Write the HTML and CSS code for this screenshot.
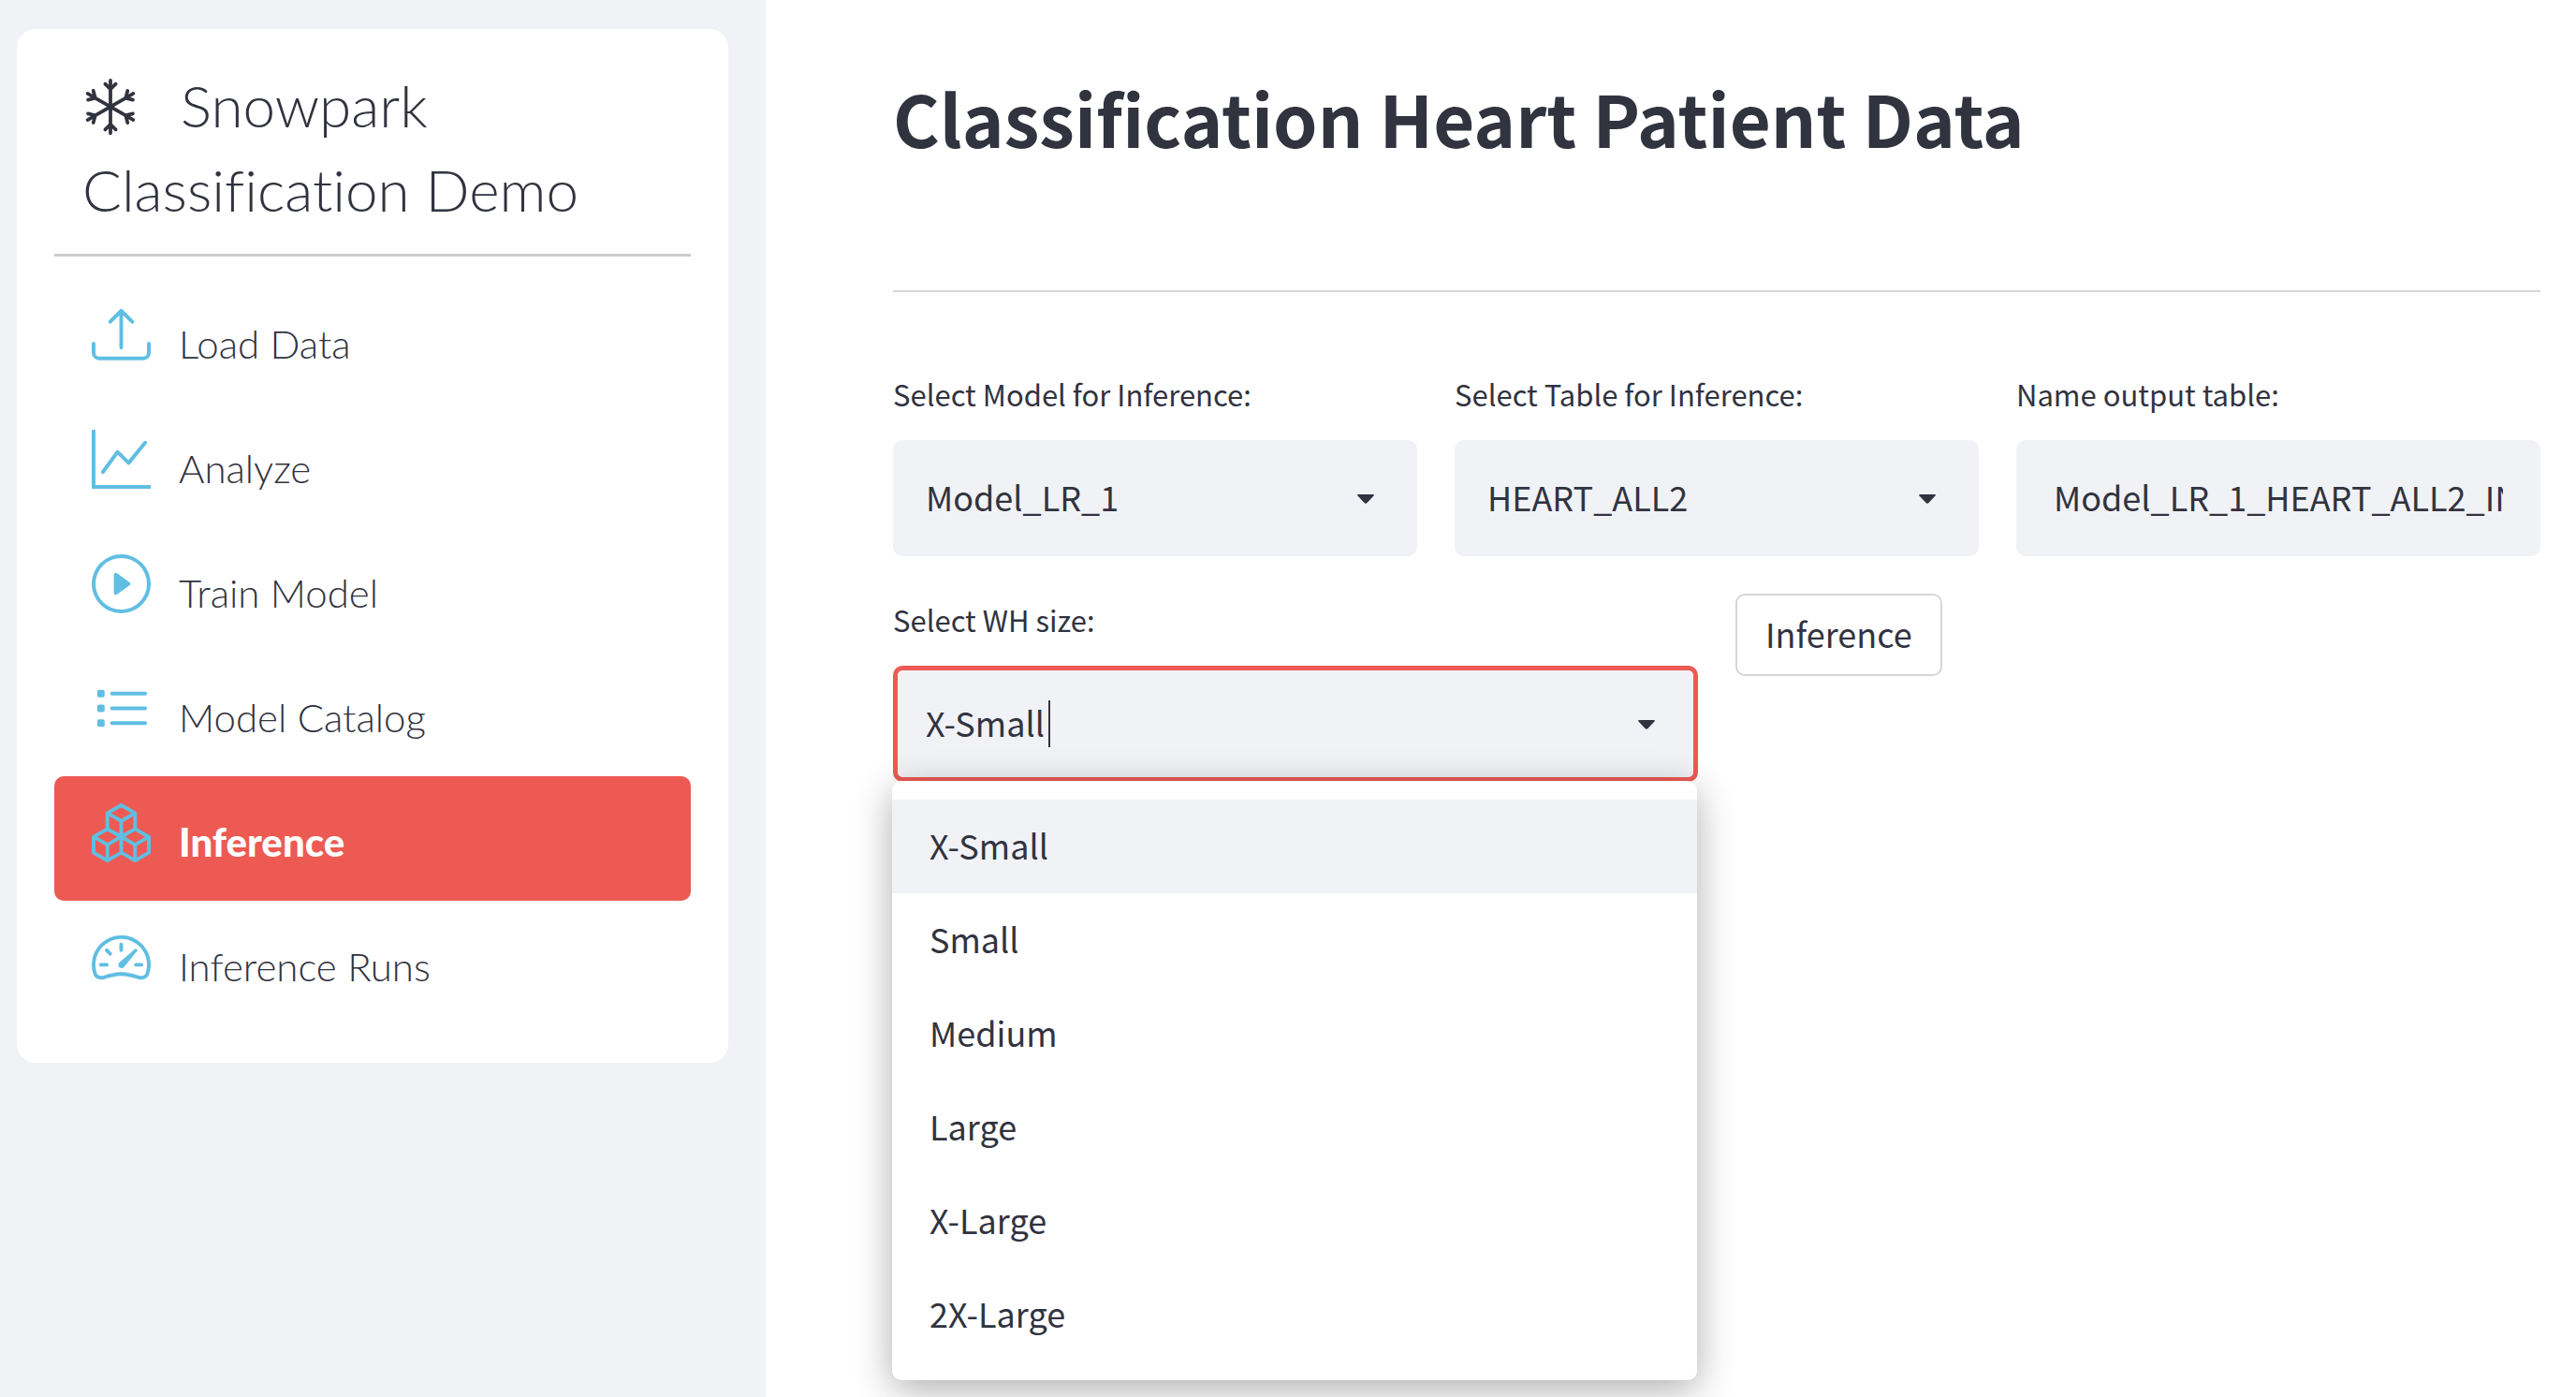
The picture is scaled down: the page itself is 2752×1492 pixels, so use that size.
FILE: index.html
```html
<!DOCTYPE html>
<html lang="en">
<head>
<meta charset="utf-8">
<title>Classification Heart Patient Data</title>
<link rel="stylesheet" href="styles.css">
</head>
<body>
<div class="app">
  <aside class="sidebar">
    <div class="menu-card">
      <h2 class="menu-title">
        <svg class="menu-logo" viewBox="0 0 16 16" aria-hidden="true"><path d="M8 16a.5.5 0 0 1-.5-.5v-1.293l-.646.647a.5.5 0 0 1-.707-.708L7.5 12.793V8.866l-3.4 1.963-.496 1.85a.5.5 0 1 1-.966-.26l.237-.882-1.12.646a.5.5 0 0 1-.5-.866l1.12-.646-.884-.237a.5.5 0 1 1 .26-.966l1.848.495L7 8 3.6 6.037l-1.85.495a.5.5 0 0 1-.258-.966l.883-.237-1.12-.646a.5.5 0 1 1 .5-.866l1.12.646-.237-.883a.5.5 0 1 1 .966-.258l.495 1.849L7.5 7.134V3.207L6.147 1.854a.5.5 0 1 1 .707-.708l.646.647V.5a.5.5 0 1 1 1 0v1.293l.647-.647a.5.5 0 1 1 .707.708L8.5 3.207v3.927l3.4-1.963.496-1.85a.5.5 0 1 1 .966.26l-.236.882 1.12-.646a.5.5 0 0 1 .5.866l-1.12.646.883.237a.5.5 0 1 1-.26.966l-1.848-.495L9 8l3.4 1.963 1.849-.495a.5.5 0 0 1 .259.966l-.883.237 1.12.646a.5.5 0 0 1-.5.866l-1.12-.646.236.883a.5.5 0 1 1-.966.258l-.495-1.849-3.4-1.963v3.927l1.353 1.353a.5.5 0 0 1-.707.708l-.647-.647V15.500a.5.5 0 0 1-.5.5z"/></svg>Snowpark Classification Demo
      </h2>
      <hr class="menu-rule">
      <nav class="menu">
        <a class="menu-item" href="#load-data">
          <svg class="menu-icon" viewBox="0 0 16 16" aria-hidden="true"><path d="M.5 9.9a.5.5 0 0 1 .5.5v2.5a1 1 0 0 0 1 1h12a1 1 0 0 0 1-1v-2.5a.5.5 0 0 1 1 0v2.5a2 2 0 0 1-2 2H2a2 2 0 0 1-2-2v-2.5a.5.5 0 0 1 .5-.5z"/><path d="M7.646 1.146a.5.5 0 0 1 .708 0l3 3a.5.5 0 0 1-.708.708L8.5 2.707V11.5a.5.5 0 0 1-1 0V2.707L5.354 4.854a.5.5 0 1 1-.708-.708l3-3z"/></svg>
          Load Data
        </a>
        <a class="menu-item" href="#analyze">
          <svg class="menu-icon" viewBox="0 0 16 16" aria-hidden="true"><path fill-rule="evenodd" d="M0 0h1v15h15v1H0V0Zm14.817 3.113a.5.5 0 0 1 .07.704l-4.5 5.5a.5.5 0 0 1-.74.037L7.06 6.767l-3.656 5.027a.5.5 0 0 1-.808-.588l4-5.5a.5.5 0 0 1 .758-.06l2.609 2.61 4.15-5.073a.5.5 0 0 1 .704-.07Z"/></svg>
          Analyze
        </a>
        <a class="menu-item" href="#train-model">
          <svg class="menu-icon" viewBox="0 0 16 16" aria-hidden="true"><path d="M8 15A7 7 0 1 1 8 1a7 7 0 0 1 0 14zm0 1A8 8 0 1 0 8 0a8 8 0 0 0 0 16z"/><path d="M6.271 5.055a.5.5 0 0 1 .52.038l3.5 2.5a.5.5 0 0 1 0 .814l-3.5 2.5A.5.5 0 0 1 6 10.5v-5a.5.5 0 0 1 .271-.445z"/></svg>
          Train Model
        </a>
        <a class="menu-item" href="#model-catalog">
          <svg class="menu-icon" viewBox="0 0 16 16" aria-hidden="true"><path d="M5.5 3.5h9a.5.5 0 0 1 0 1h-9a.5.5 0 0 1 0-1zM5.5 7.5h9a.5.5 0 0 1 0 1h-9a.5.5 0 0 1 0-1zM5.5 11.5h9a.5.5 0 0 1 0 1h-9a.5.5 0 0 1 0-1z"/><rect x="1.5" y="3" width="2" height="2" rx=".5"/><rect x="1.5" y="7" width="2" height="2" rx=".5"/><rect x="1.5" y="11" width="2" height="2" rx=".5"/></svg>
          Model Catalog
        </a>
        <a class="menu-item menu-item-active" href="#inference" aria-current="page">
          <svg class="menu-icon" viewBox="0 0 16 16" aria-hidden="true"><path d="M7.752.066a.5.5 0 0 1 .496 0l3.75 2.143a.5.5 0 0 1 .252.434v3.995l3.498 2A.5.5 0 0 1 16 9.07v4.286a.5.5 0 0 1-.252.434l-3.75 2.143a.5.5 0 0 1-.496 0l-3.502-2-3.502 2.001a.5.5 0 0 1-.496 0l-3.75-2.143A.5.5 0 0 1 0 13.357V9.071a.5.5 0 0 1 .252-.434L3.75 6.638V2.643a.5.5 0 0 1 .252-.434L7.752.066ZM4.25 7.504 1.508 9.071l2.742 1.567 2.742-1.567L4.25 7.504ZM7.5 9.933l-2.75 1.571v3.134l2.75-1.571V9.933Zm1 3.134 2.75 1.571v-3.134L8.5 9.933v3.134Zm.508-3.996 2.742 1.567 2.742-1.567-2.742-1.567-2.742 1.567Zm2.242-2.433V3.504L8.5 5.076V8.21l2.75-1.572ZM7.5 8.21V5.076L4.75 3.504v3.134L7.5 8.21ZM5.258 2.643 8 4.21l2.742-1.567L8 1.076 5.258 2.643ZM15 9.933l-2.75 1.571v3.134L15 13.067V9.933ZM3.75 14.638v-3.134L1 9.933v3.134l2.75 1.571Z"/></svg>
          Inference
        </a>
        <a class="menu-item" href="#inference-runs">
          <svg class="menu-icon" viewBox="0 0 16 16" aria-hidden="true"><path d="M8 4a.5.5 0 0 1 .5.5V6a.5.5 0 0 1-1 0V4.500A.5.5 0 0 1 8 4zM3.732 5.732a.5.5 0 0 1 .707 0l.915.914a.5.5 0 1 1-.708.708l-.914-.915a.5.5 0 0 1 0-.707zM2 10a.5.5 0 0 1 .5-.5h1.586a.5.5 0 0 1 0 1H2.5A.5.5 0 0 1 2 10zm9.5 0a.5.5 0 0 1 .5-.5h1.5a.5.5 0 0 1 0 1H12a.5.5 0 0 1-.5-.5zm.754-4.246a.389.389 0 0 0-.527-.02L7.547 9.31a.91.91 0 1 0 1.302 1.258l3.434-4.297a.389.389 0 0 0-.029-.518z"/><path fill-rule="evenodd" d="M0 10a8 8 0 1 1 15.547 2.661c-.442 1.253-1.845 1.602-2.932 1.25C11.309 13.488 9.475 13 8 13c-1.474 0-3.31.488-4.615.911-1.087.352-2.49.003-2.932-1.25A7.988 7.988 0 0 1 0 10zm8-7a7 7 0 0 0-6.603 9.329c.203.575.923.876 1.68.63C4.397 12.533 6.358 12 8 12s3.604.532 4.923.96c.757.245 1.477-.056 1.68-.631A7 7 0 0 0 8 3z"/></svg>
          Inference Runs
        </a>
      </nav>
    </div>
  </aside>

  <main class="content">
    <h1 class="page-title">Classification Heart Patient Data</h1>
    <hr class="page-rule">

    <form class="form">
      <div class="row row-thirds">
        <div class="field">
          <label class="label" for="model">Select Model for Inference:</label>
          <div class="select">
            <select class="control" id="model"><option>Model_LR_1</option></select>
            <svg class="chevron" viewBox="0 0 18 10" aria-hidden="true"><path d="M1 0h16q1.500 0 .5 1.500L10.500 9q-1.500 1.500-3 0L.5 1.500Q-.5 0 1 0z"/></svg>
          </div>
        </div>
        <div class="field">
          <label class="label" for="table">Select Table for Inference:</label>
          <div class="select">
            <select class="control" id="table"><option>HEART_ALL2</option></select>
            <svg class="chevron" viewBox="0 0 18 10" aria-hidden="true"><path d="M1 0h16q1.500 0 .5 1.500L10.500 9q-1.500 1.500-3 0L.5 1.500Q-.5 0 1 0z"/></svg>
          </div>
        </div>
        <div class="field">
          <label class="label" for="output">Name output table:</label>
          <input class="control control-text" id="output" type="text" value="Model_LR_1_HEART_ALL2_INFERENCE">
        </div>
      </div>

      <div class="row row-halves">
        <div class="field">
          <label class="label" for="size">Select WH size:</label>
          <div class="combo">
            <div class="control combo-box">
              <input class="combo-input" id="size" type="text" role="combobox" aria-expanded="true" aria-controls="size-list" value="X-Small">
              <span class="caret"></span>
              <svg class="chevron" viewBox="0 0 18 10" aria-hidden="true"><path d="M1 0h16q1.500 0 .5 1.500L10.500 9q-1.500 1.500-3 0L.5 1.500Q-.5 0 1 0z"/></svg>
            </div>
            <ul class="options" id="size-list" role="listbox">
              <li class="option option-active" role="option" aria-selected="true">X-Small</li>
              <li class="option" role="option">Small</li>
              <li class="option" role="option">Medium</li>
              <li class="option" role="option">Large</li>
              <li class="option" role="option">X-Large</li>
              <li class="option" role="option">2X-Large</li>
            </ul>
          </div>
        </div>
        <div class="field">
          <button class="button" type="button">Inference</button>
        </div>
      </div>
    </form>
  </main>
</div>
</body>
</html>
```
FILE: styles.css
```css
* {
  box-sizing: border-box;
}

body {
  margin: 0;
  background: #fff;
  color: #31333f;
  font-family: "Noto Sans CJK SC", "Noto Sans", sans-serif;
  font-size: 36px;
  line-height: 60px;
}

.app {
  display: grid;
  grid-template-columns: 818px minmax(0, 1fr);
  min-height: 100vh;
}

/* Sidebar */

.sidebar {
  padding: 31px 40px 31px 18px;
  background: #f0f2f6;
}

.menu-card {
  padding: 36px 40px 40px;
  border-radius: 20px;
  background: #fff;
  font-family: Lato, "Open Sans", sans-serif;
  font-variant-ligatures: none;
}

.menu-title {
  margin: 0;
  padding: 0 30px;
  font-size: 62px;
  font-weight: 300;
  line-height: 90px;
}

.menu-logo {
  width: 60px;
  height: 60px;
  margin-right: 45px;
  fill: currentColor;
  vertical-align: -8px;
}

.menu-rule {
  height: 3px;
  margin: 24px 0 23px;
  border: 0;
  background: #ccc;
}

.menu {
  display: flex;
  flex-direction: column;
}

.menu-item {
  display: flex;
  align-items: center;
  gap: 30px;
  height: 133px;
  padding: 6px 40px 0;
  border-radius: 10px;
  color: inherit;
  font-size: 42px;
  font-weight: 300;
  text-decoration: none;
}

.menu-item-active {
  background: #ed5a53;
  color: #fff;
  font-weight: 900;
}

.menu-icon {
  width: 63px;
  height: 63px;
  margin-bottom: 18px;
  fill: #60bee2;
}

/* Main column */

.content {
  padding: 65px 38px 0 136px;
}

.page-title {
  margin: 0;
  font-size: 76px;
  font-weight: 700;
  line-height: 120px;
}

.page-rule {
  height: 2px;
  margin: 125px 0 81px;
  border: 0;
  background: #d6d6d8;
}

.form {
  display: grid;
  gap: 40px;
}

.row {
  display: grid;
  gap: 40px;
}

.row-thirds {
  grid-template-columns: repeat(3, minmax(0, 1fr));
}

.row-halves {
  grid-template-columns: repeat(2, minmax(0, 1fr));
}

.label {
  display: block;
  margin-bottom: 21px;
  font-size: 31px;
  line-height: 56px;
}

.select {
  display: grid;
  align-items: center;
}

.select > * {
  grid-area: 1 / 1;
}

.control {
  width: 100%;
  height: 124px;
  padding: 0 30px 4px;
  border: 5px solid #f0f2f6;
  border-radius: 10px;
  background: #f0f2f6;
  color: inherit;
  font: inherit;
  appearance: none;
}

.control-text {
  padding: 0 35px 4px;
}

.chevron {
  width: 18px;
  height: 10px;
  margin-top: 2px;
  margin-right: 46px;
  fill: currentColor;
  justify-self: end;
  pointer-events: none;
}

.combo {
  position: relative;
}

.combo-box {
  display: flex;
  align-items: center;
  border-color: #ed5a53;
}

.combo-box .chevron {
  margin-top: 6px;
  margin-left: auto;
  margin-right: 11px;
}

.combo-input {
  width: 128px;
  padding: 0;
  border: 0;
  outline: 0;
  background: none;
  color: inherit;
  font: inherit;
  field-sizing: content;
}

.caret {
  width: 2px;
  height: 50px;
  margin-top: 4px;
  margin-left: 3px;
  background: #31333f;
}

.options {
  position: absolute;
  top: calc(100% - 1px);
  left: -1px;
  width: 100%;
  margin: 0;
  padding: 20px 0;
  border-radius: 10px;
  background: #fff;
  box-shadow: 0 10px 40px rgba(0, 0, 0, .32);
  list-style: none;
}

.option {
  padding: 18px 40px 22px;
}

.option-active {
  background: #f0f2f6;
}

.button {
  height: 88px;
  padding: 0 30px 4px;
  border: 2px solid #d6d6d8;
  border-radius: 10px;
  background: #fff;
  color: inherit;
  font: inherit;
}
```
